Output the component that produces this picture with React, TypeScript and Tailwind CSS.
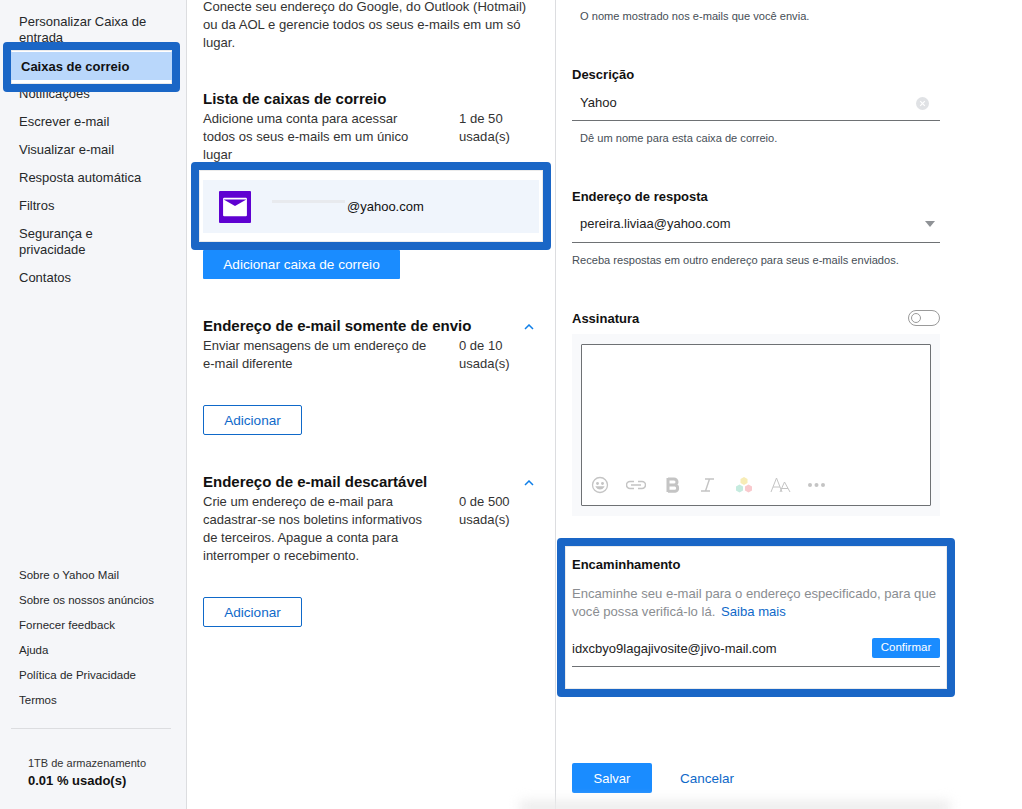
import React from "react";

const NAV_ROW = "h-7 flex items-center text-[13px] leading-4 text-[#26282a]";
const LINK_ROW = "h-[25px] flex items-center text-[11.5px] text-[#26282a]";
const BLUE_OUTLINE = "absolute border-[8px] border-[#1a66c6] rounded-[4px] shadow-[inset_0_0_0_1px_rgba(0,0,0,0.08)]";
const HINT = "text-[11.1px] leading-[14px] text-[#464e56]";
const LABEL = "text-[13px] leading-4 font-bold text-[#111]";

function Chevron() {
  return (
    <svg width="10" height="6" viewBox="0 0 10 6" fill="none" className="mt-[7px] mr-[5px] shrink-0">
      <path d="M1 5l4-4 4 4" stroke="#0f7fe8" strokeWidth="1.5" />
    </svg>
  );
}

function Section({ title, lines, count }: { title: string; lines: string[]; count: string[] }) {
  return (
    <section>
      <div className="flex justify-between">
        <h3 className="text-[15px] leading-[18px] font-bold text-[#111]">{title}</h3>
        <Chevron />
      </div>
      <div className="flex mt-[2px] text-[13px] leading-[18px] text-[#333]">
        <div className="w-[256px]">
          {lines.map((l) => (
            <div key={l}>{l}</div>
          ))}
        </div>
        <div>
          {count.map((l) => (
            <div key={l}>{l}</div>
          ))}
        </div>
      </div>
      <button className="mt-[32px] pt-[2px] w-[99px] h-[30px] border border-[#0f69c9] rounded-[2px] text-[13.6px] text-[#0f69c9] bg-white">
        Adicionar
      </button>
    </section>
  );
}

function Slot({ children }: { children: React.ReactNode }) {
  return <div className="w-9 flex items-center justify-center">{children}</div>;
}

function Toolbar() {
  return (
    <div className="flex items-center h-5">
      <Slot>
        <svg width="18" height="18" viewBox="0 0 18 18" fill="none" stroke="#c4c4c4" strokeWidth="1.3">
          <circle cx="9" cy="9" r="7.5" />
          <circle cx="6.5" cy="7.5" r="0.8" fill="#c4c4c4" />
          <circle cx="11.5" cy="7.5" r="0.8" fill="#c4c4c4" />
          <path d="M5.5 11c1.5 2.5 5.5 2.5 7 0z" fill="#c4c4c4" />
        </svg>
      </Slot>
      <Slot>
        <svg width="20" height="18" viewBox="0 0 20 18" fill="none" stroke="#c4c4c4" strokeWidth="1.5">
          <path d="M8 5.5H4a3.5 3.5 0 0 0 0 7h4M12 5.5h4a3.5 3.5 0 0 1 0 7h-4M5 9h10" />
        </svg>
      </Slot>
      <Slot>
        <svg width="15" height="18" viewBox="0 0 15 18" fill="none" stroke="#c4c4c4" strokeWidth="3">
          <path d="M3 2v14M3 3h6a3 3 0 0 1 0 6H3M3 9h7a3.2 3.2 0 0 1 0 6.3H3" />
        </svg>
      </Slot>
      <Slot>
        <svg width="16" height="18" viewBox="0 0 16 18" fill="none" stroke="#c4c4c4" strokeWidth="1.4">
          <path d="M5 3h9M1 15h9M9.5 3L5.5 15" />
        </svg>
      </Slot>
      <Slot>
        <svg width="18" height="18" viewBox="0 0 18 18">
          <polygon points="9,1 12.5,3 12.5,7 9,9 5.5,7 5.5,3" fill="#f7ecb6" />
          <polygon points="4.5,8.5 8,10.5 8,14.5 4.5,16.5 1,14.5 1,10.5" fill="#c5ebdf" />
          <polygon points="13.5,8.5 17,10.5 17,14.5 13.5,16.5 10,14.5 10,10.5" fill="#f9c9cd" />
        </svg>
      </Slot>
      <Slot>
        <svg width="21" height="18" viewBox="0 0 21 18" fill="none" stroke="#c4c4c4" strokeWidth="1">
          <path d="M1 16L6.5 2 12 16M3 11h7M10 16l4.5-10L20 16M11.5 12.5h6.5" />
        </svg>
      </Slot>
      <Slot>
        <svg width="19" height="6" viewBox="0 0 19 6" fill="#c4c4c4">
          <circle cx="3" cy="3" r="2" />
          <circle cx="9.5" cy="3" r="2" />
          <circle cx="16" cy="3" r="2" />
        </svg>
      </Slot>
    </div>
  );
}

export default function App() {
  return (
    <div
      className="relative w-[1022px] h-[809px] overflow-hidden bg-white flex text-[#26282a]"
      style={{ fontFamily: '"Liberation Sans", Arial, sans-serif' }}
    >
      {/* Sidebar */}
      <aside className="w-[187px] shrink-0 h-full bg-[#f5f6f9] border-r border-[#dcdde0] pl-[19px] pr-[15px] flex flex-col">
        <div className="pt-[14px] text-[13px] leading-4">
          <div className="text-[#26282a]">Personalizar Caixa de entrada</div>
          <div className="h-[34px]" />
          <div className={NAV_ROW}>Notificações</div>
          <div className={NAV_ROW}>Escrever e-mail</div>
          <div className={NAV_ROW}>Visualizar e-mail</div>
          <div className={NAV_ROW}>Resposta automática</div>
          <div className={NAV_ROW}>Filtros</div>
          <div className="pt-[6px] pb-[6px]">Segurança e<br />privacidade</div>
          <div className={NAV_ROW}>Contatos</div>
        </div>
        <div className="mt-[271px]">
          {["Sobre o Yahoo Mail", "Sobre os nossos anúncios", "Fornecer feedback", "Ajuda", "Política de Privacidade", "Termos"].map((t) => (
            <div key={t} className={LINK_ROW}>{t}</div>
          ))}
        </div>
        <div className="mt-[15px] -ml-2 h-px bg-[#dcdde0]" />
        <div className="mt-[27px] pl-[9px]">
          <div className="text-[11px] leading-[14px] text-[#333]">1TB de armazenamento</div>
          <div className="mt-[3px] text-[13px] leading-4 font-bold text-[#111]">0.01 % usado(s)</div>
        </div>
      </aside>

      {/* Middle column */}
      <main className="w-[369px] shrink-0 h-[812px] border-r border-[#dcdde0] pl-4 pr-4 -mt-[2px]">
        <p className="text-[13.1px] leading-[18px] text-[#333] w-[340px]">
          Conecte seu endereço do Google, do Outlook (Hotmail)
          <br />ou da AOL e gerencie todos os seus e-mails em um só
          <br />lugar.
        </p>
        <h3 className="mt-[38px] text-[15px] leading-[18px] font-bold text-[#111]">Lista de caixas de correio</h3>
        <div className="flex mt-[2px] text-[13.1px] leading-[18px] text-[#333]">
          <div className="w-[256px]">
            Adicione uma conta para acessar
            <br />todos os seus e-mails em um único
            <br />lugar
          </div>
          <div>
            1 de 50
            <br />usada(s)
          </div>
        </div>
        <div className="mt-[16px] h-[53px] w-[336px] bg-[#f0f5fc] flex items-center pl-4">
          <div className="w-8 h-8 rounded-[1px] bg-[#5f01d1] flex items-center justify-center">
            <svg width="26" height="20" viewBox="0 0 24 18">
              <path d="M1 1.5a1 1 0 0 1 1-1h20a1 1 0 0 1 1 1v15a1 1 0 0 1-1 1H2a1 1 0 0 1-1-1z" fill="#fff" />
              <path d="M1.5 2h21L12 8z" fill="#5f01d1" />
            </svg>
          </div>
          <div className="relative ml-[21px] w-[75px] h-px">
            <div className="absolute left-0 -top-[6px] h-[3px] w-[73px] bg-[#e8eaee]" />
          </div>
          <span className="text-[13px] text-[#111]">@yahoo.com</span>
        </div>
        <button className="mt-[17px] pt-[2px] block w-[197px] h-[29px] bg-[#1a8cff] rounded-[1px] text-[13.6px] text-white">
          Adicionar caixa de correio
        </button>
        <div className="mt-[38px]">
          <Section
            title="Endereço de e-mail somente de envio"
            lines={["Enviar mensagens de um endereço de", "e-mail diferente"]}
            count={["0 de 10", "usada(s)"]}
          />
        </div>
        <div className="mt-[38px]">
          <Section
            title="Endereço de e-mail descartável"
            lines={["Crie um endereço de e-mail para", "cadastrar-se nos boletins informativos", "de terceiros. Apague a conta para", "interromper o recebimento."]}
            count={["0 de 500", "usada(s)"]}
          />
        </div>
      </main>

      {/* Right column */}
      <div className="w-[384px] shrink-0 h-full pl-[16px] pr-px">
        <div className="w-[368px]">
          <p className={`pt-[9px] pl-2 ${HINT}`}>O nome mostrado nos e-mails que você envia.</p>
          <h4 className={`mt-[44px] ${LABEL}`}>Descrição</h4>
          <div className="mt-[3px] h-[35px] border-b border-[#6e7174] pl-2 pr-[11px] flex items-center justify-between text-[13px] text-[#222]">
            <span>Yahoo</span>
            <svg width="13" height="13" viewBox="0 0 13 13">
              <circle cx="6.5" cy="6.5" r="6.5" fill="#e0e2e5" />
              <path d="M4.2 4.2l4.6 4.6M8.8 4.2l-4.6 4.6" stroke="#fff" strokeWidth="1.2" />
            </svg>
          </div>
          <p className={`mt-[10px] pl-2 ${HINT}`}>Dê um nome para esta caixa de correio.</p>
          <h4 className={`mt-[44px] ${LABEL}`}>Endereço de resposta</h4>
          <div className="mt-px h-[37px] border-b border-[#6e7174] pl-2 pr-[5px] flex items-center justify-between text-[13px] text-[#222]">
            <span>pereira.liviaa@yahoo.com</span>
            <svg width="10" height="6" viewBox="0 0 10 6">
              <path d="M0 0h10L5 6z" fill="#8f9296" />
            </svg>
          </div>
          <p className={`mt-[10px] ${HINT}`}>Receba respostas em outro endereço para seus e-mails enviados.</p>
          <div className="mt-[43px] flex items-center justify-between h-[16px]">
            <h4 className={`${LABEL} pt-px`}>Assinatura</h4>
            <div className="w-8 h-4 rounded-full border border-[#9a9a9a] flex items-center pl-[2px]">
              <div className="w-[10px] h-[10px] rounded-full border border-[#9a9a9a]" />
            </div>
          </div>
          <div className="mt-2 h-[182px] bg-[#f8f9fb] py-[10px] pl-[9px] pr-[9px]">
            <div className="h-[162px] bg-white border border-[#6e7174] rounded-[1px] flex items-end pb-[10px]">
              <Toolbar />
            </div>
          </div>
          <h4 className={`mt-[41px] ${LABEL}`}>Encaminhamento</h4>
          <p className="mt-[12px] text-[13.1px] leading-[18px] text-[#8a8d91] whitespace-nowrap">
            Encaminhe seu e-mail para o endereço especificado, para que
            <br />você possa verificá-lo lá. <a className="ml-[2px] text-[#0f69c9]">Saiba mais</a>
          </p>
          <div className="mt-[15px] h-[31px] border-b border-[#6e7174] flex items-start justify-between text-[13px] text-[#222]">
            <span className="mt-[3px]">idxcbyo9lagajivosite@jivo-mail.com</span>
            <button className="mt-[2px] w-[68px] h-5 bg-[#1a8cff] rounded-[2px] text-[11.5px] text-white">Confirmar</button>
          </div>
          <div className="mt-[96px] flex items-center">
            <button className="pt-[2px] w-20 h-[30px] bg-[#1a8cff] rounded-[2px] text-[13px] text-white">Salvar</button>
            <a className="ml-[28px] pt-[2px] text-[13.5px] text-[#0f69c9]">Cancelar</a>
          </div>
        </div>
      </div>

      {/* Annotation overlays */}
      <div className={`${BLUE_OUTLINE} left-[3px] top-[42px] w-[177px] h-[50px] bg-white`}>
        <div className="mt-[2px] pt-[2px] h-[28px] bg-[#b9d7fb] flex items-center pl-[10px] text-[13px] font-bold text-[#111]">Caixas de correio</div>
      </div>
      <div className={`${BLUE_OUTLINE} left-[191px] top-[162px] w-[360px] h-[88px]`} />
      <div className={`${BLUE_OUTLINE} left-[557px] top-[538px] w-[398px] h-[159px]`} />

      <div className="absolute left-[520px] -bottom-[6px] w-[430px] h-[14px] bg-[#ececec] blur-[6px]" />
    </div>
  );
}
